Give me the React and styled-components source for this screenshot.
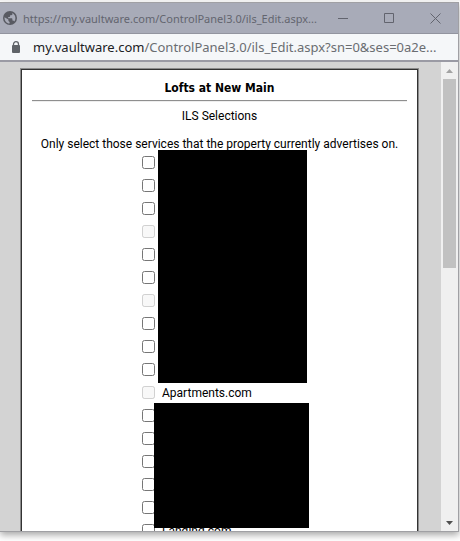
import styled, { createGlobalStyle } from "styled-components"

const GlobalStyle = createGlobalStyle`
    *, *::before, *::after {
        box-sizing:border-box;
    }

    body {
        margin:0;
        background-color:#ffffff;
        font-family:Roboto, "DejaVu Sans Condensed", sans-serif;
        font-size:12px;
        color:#000000;
    }
    `

const Desktop = styled.div`
    height:100vh;
    padding:1px 1px 9px 0;
    background-color:#ffffff;
    border-top:1px solid #f0f0f0;
    overflow:hidden;
    `

const Window = styled.div`
    height:100%;
    display:flex;
    flex-direction:column;
    border:1px solid #a0a0a4;
    border-left:none;
    box-shadow:0 3px 7px rgba(0, 0, 0, 0.35);
    `

const TitleBar = styled.header`
    flex:none;
    height:31px;
    display:flex;
    align-items:center;
    padding-left:3px;
    background-color:#a8abb8;
    border-bottom:1px solid #92949f;
    color:#63656f;
    `

const TitleText = styled.span`
    flex:1;
    min-width:0;
    margin-left:6px;
    overflow:hidden;
    white-space:nowrap;
    text-overflow:ellipsis;
    font-family:"Noto Sans", "Open Sans", sans-serif;
    font-size:11px;
    `

const WindowButton = styled.button`
    flex:none;
    width:46px;
    height:30px;
    padding:0;
    display:flex;
    align-items:center;
    justify-content:center;
    border:none;
    background:none;
    color:#62646e;
    `

const AddressBar = styled.div`
    flex:none;
    height:28px;
    padding:0 8px 0 11px;
    display:flex;
    align-items:center;
    gap:12px;
    background-color:#f5f7f9;
    border-bottom:2px solid #9a9aa4;
    `

const Address = styled.span`
    flex:1;
    min-width:0;
    overflow:hidden;
    white-space:nowrap;
    font-family:"Noto Sans", "Open Sans", sans-serif;
    font-size:13px;
    line-height:24px;
    color:#6a6d71;
    `

const Host = styled.span`
    color:#202124;
    `

const Body = styled.div`
    flex:1;
    min-height:0;
    display:flex;
    background-color:#d3d3d3;
    `

const Page = styled.main`
    flex:1;
    min-width:0;
    padding:6px 22px 0 20px;
    overflow:hidden;
    `

const Card = styled.div`
    padding:10px;
    background-color:#ffffff;
    border:2px solid #333333;
    outline:1px solid #8c8c8c;
    outline-offset:-1px;
    text-align:center;
    `

const Heading = styled.h1`
    margin:0;
    font-family:"DejaVu Sans Condensed", "DejaVu Sans", sans-serif;
    font-size:12px;
    line-height:16px;
    `

const Rule = styled.hr`
    margin:4px 0 6px;
    border:none;
    border-top:1px solid #8f8f8f;
    border-bottom:1px solid #eeeeee;
    `

const Line = styled.p`
    margin:0 0 12px;
    line-height:16px;
    white-space:nowrap;
    `

const Services = styled.form`
    width:155px;
    margin:-13px auto 0;
    display:flex;
    flex-direction:column;
    `

const Group = styled.div`
    position:relative;
    `

const Service = styled.label`
    height:23px;
    display:flex;
    align-items:center;
    gap:7px;
    `

const Checkbox = styled.input`
    width:13px;
    height:13px;
    margin:0;
    `

const Redaction = styled.div`
    position:absolute;
    top:-1px;
    bottom:${props => props.$bottom}px;
    left:${props => props.$left}px;
    width:${props => props.$width}px;
    background-color:#000000;
    `

const ScrollBar = styled.div`
    flex:none;
    width:17px;
    display:flex;
    flex-direction:column;
    align-items:center;
    background-color:#f0f0f0;
    `

const ScrollButton = styled.button`
    flex:none;
    width:17px;
    height:17px;
    padding:0;
    display:flex;
    align-items:center;
    justify-content:center;
    border:none;
    background:none;
    color:${props => props.$muted ? "#a3a3a3" : "#505050"};
    `

const Track = styled.div`
    flex:1;
    width:13px;
    `

const Thumb = styled.div`
    height:43.5%;
    background-color:#c1c1c1;
    `

const firstGroup = [false, false, false, true, false, false, true, false, false, false]
const secondGroup = [false, false, false, false, false]

function ServiceGroup({ items, start, left, width, bottom }) {
    return (
        <Group>
            {items.map((disabled, i) => (
                <Service key={i}>
                    <Checkbox type="checkbox" disabled={disabled} aria-label={`Service ${start + i}`} />
                </Service>
            ))}
            <Redaction $left={left} $width={width} $bottom={bottom} />
        </Group>
    )
}

function GlobeIcon() {
    return (
        <svg width="14" height="14" viewBox="0 0 14 14">
            <circle cx="7" cy="7" r="7" fill="#585a62" />
            <path d="M1.500 6.200 5.400 8.400V10l1.200 1v1.600C3.600 12.400 1.300 9.800 1.500 6.200ZM8.700 1.700c2 .7 3.600 2.700 3.700 5 .1 1.500-.4 2.900-1.200 3.900-.2-.6-.6-1-1.300-1H9.400V8c0-.4-.3-.7-.6-.7H5.200V6h1.200c.4 0 .7-.3.700-.7V4.300h1.200c.7 0 1.200-.5 1.200-1.200 0-.6-.3-1-.8-1.400Z" fill="#a8abb8" />
        </svg>
    )
}

function LockIcon() {
    return (
        <svg width="10" height="12" viewBox="0 0 10 12">
            <path d="M2.500 5V3.200a2.500 2.500 0 0 1 5 0V5" fill="none" stroke="#5f6368" strokeWidth="1.300" />
            <rect x="1" y="4" width="8" height="8" rx="1" fill="#5f6368" />
        </svg>
    )
}

export default function App() {

    return (
        <>
            <GlobalStyle />
            <Desktop>
                <Window>
                    <TitleBar>
                        <GlobeIcon />
                        <TitleText>https://my.vaultware.com/ControlPanel3.0/ils_Edit.aspx...</TitleText>
                        <WindowButton aria-label="Minimize">
                            <svg width="11" height="11"><path d="M0 5.500H10" stroke="currentColor" /></svg>
                        </WindowButton>
                        <WindowButton aria-label="Maximize">
                            <svg width="11" height="11"><path d="M.5.500h9v9h-9Z" fill="none" stroke="currentColor" /></svg>
                        </WindowButton>
                        <WindowButton aria-label="Close">
                            <svg width="11" height="11"><path d="M.5.500l10 10M10.500.500l-10 10" stroke="currentColor" /></svg>
                        </WindowButton>
                    </TitleBar>
                    <AddressBar>
                        <LockIcon />
                        <Address><Host>my.vaultware.com</Host>/ControlPanel3.0/ils_Edit.aspx?sn=0&amp;ses=0a2e...</Address>
                    </AddressBar>
                    <Body>
                        <Page>
                            <Card>
                                <Heading>Lofts at New Main</Heading>
                                <Rule />
                                <Line>ILS Selections</Line>
                                <Line>Only select those services that the property currently advertises on.</Line>
                                <Services>
                                    <ServiceGroup items={firstGroup} start={1} left={16} width={149} bottom={-2} />
                                    <Service>
                                        <Checkbox type="checkbox" disabled />
                                        Apartments.com
                                    </Service>
                                    <ServiceGroup items={secondGroup} start={12} left={12} width={155} bottom={-9} />
                                    <Service>
                                        <Checkbox type="checkbox" />
                                        Landing.com
                                    </Service>
                                </Services>
                            </Card>
                        </Page>
                        <ScrollBar>
                            <ScrollButton $muted aria-label="Scroll up">
                                <svg width="7" height="4"><path d="M0 4 3.500 0 7 4Z" fill="currentColor" /></svg>
                            </ScrollButton>
                            <Track><Thumb /></Track>
                            <ScrollButton aria-label="Scroll down">
                                <svg width="7" height="4"><path d="M0 0 3.500 4 7 0Z" fill="currentColor" /></svg>
                            </ScrollButton>
                        </ScrollBar>
                    </Body>
                </Window>
            </Desktop>
        </>
    )
}
